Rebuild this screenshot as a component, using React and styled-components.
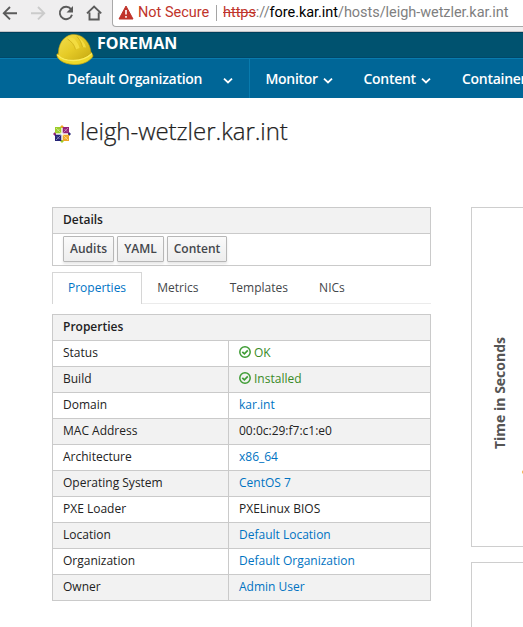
import React from "react";
import styled, { createGlobalStyle, css } from "styled-components";

const GlobalStyle = createGlobalStyle`
  *, *::before, *::after { box-sizing: border-box; }
  html, body { margin: 0; padding: 0; background: #fff; overflow: hidden; }
  body { font-family: "Open Sans", sans-serif; font-size: 12px; line-height: 18px; color: #222; }
`;

const Page = styled.div`
  width: 523px;
  height: 627px;
  overflow: hidden;
`;

const BrowserBar = styled.div`
  display: flex;
  height: 32px;
  background: #efeeef;
  border-bottom: 1px solid #c6c4c6;
`;

const BrowserButtons = styled.div`
  display: flex;
  width: 112px;
  flex: none;
  svg { display: block; }
`;

const AddressBox = styled.div`
  display: flex;
  flex: 1;
  height: 27px;
  min-width: 0;
  background: #fff;
  border: 1px solid #a9a9a9;
  border-top: 0;
  border-right: 0;
  border-bottom-left-radius: 4px;
  font: 14.5px/26px Roboto, sans-serif;
  white-space: nowrap;
  svg { flex: none; margin: 5px 4px 0 5px; }
`;

const Warning = styled.span`
  width: 78px;
  flex: none;
  color: #c0342b;
`;

const AddressDivider = styled.span`
  width: 1px;
  height: 16px;
  margin: 5px 6px 0 0;
  flex: none;
  background: #a5a5a5;
`;

const Url = styled.span`
  color: #808080;
  letter-spacing: -0.05px;
  s { color: #c0342b; }
  b { font-weight: 400; color: #000; }
`;

const Masthead = styled.header`
  display: flex;
  height: 26px;
  padding-left: 55px;
  background: #00526f;
  border-top: 1px solid #003f5c;
  border-bottom: 1px solid #00486a;
`;

const HelmetIcon = styled.svg`
  position: relative;
  z-index: 1;
  flex: none;
  width: 40px;
  height: 34px;
`;

const Brand = styled.span`
  margin-left: 2px;
  color: #fff;
  font-size: 16px;
  line-height: 20px;
  font-weight: 700;
`;

const Nav = styled.nav`
  display: flex;
  height: 40px;
  background: #006697;
  border-top: 1px solid #087bae;
  color: #fff;
  font-size: 14px;
  line-height: 40px;
  font-weight: 600;
  letter-spacing: -0.29px;
  white-space: nowrap;
`;

const NavItem = styled.div`
  display: flex;
  flex: none;
  width: ${(p) => p.$width}px;
  padding-left: ${(p) => p.$inset}px;
  ${(p) => p.$divided && css`border-right: 1px solid #087bae;`}
  svg { flex: none; margin: 18px 0 0 ${(p) => p.$gap}px; }
`;

const Title = styled.h1`
  display: flex;
  margin: 0;
  height: 109px;
  padding: 15px 0 0 52px;
  font-size: 24px;
  line-height: 36px;
  font-weight: 300;
  letter-spacing: -0.04px;
  -webkit-text-stroke: 0.25px #222;
  color: #222;
  svg { flex: none; margin: 11px 8px 0 0; }
`;

const Columns = styled.main`
  display: grid;
  grid-template-columns: 379px 1fr;
  column-gap: 40px;
  margin-left: 52px;
`;

const Panel = styled.section`
  border: 1px solid #cacaca;
  background: #fff;
`;

const PanelHeading = styled.div`
  height: 26px;
  padding: 3px 10px;
  background: #f2f2f2;
  border-bottom: 1px solid #cacaca;
  font-weight: 600;
`;

const Actions = styled.div`
  display: flex;
  gap: 3px;
  height: 31px;
  padding: 2px 10px;
`;

const Button = styled.button`
  width: ${(p) => p.$width}px;
  height: 26px;
  padding: 0 0 1px;
  border: 1px solid #b7b7b7;
  border-radius: 1px;
  background: linear-gradient(#fafafa, #ededed);
  box-shadow: 0 2px 3px rgba(3, 3, 3, 0.1);
  color: #44474c;
  font: 600 12px/22px "Open Sans", sans-serif;
`;

const Tabs = styled.div`
  display: flex;
  height: 32px;
  margin: 6px 0 10px;
  border-bottom: 1px solid #ebebeb;
`;

const Tab = styled.div`
  height: 32px;
  padding: 6px 15px 0 14.2px;
  border: 1px solid transparent;
  border-width: 1px 1px 0;
  color: #43464a;
  ${(p) => p.$active && css`
    padding-left: 15px;
    background: #fff;
    border-color: #d6d6d6;
    color: #0074c5;
  `}
`;

const PropertyRow = styled.div`
  display: grid;
  grid-template-columns: 175px 1fr;
  height: 26px;
  background: ${(p) => (p.$shaded ? "#f2f2f2" : "#fff")};
  border-bottom: 1px solid #cacaca;
  &:last-child { height: 25px; border-bottom: 0; }
`;

const tones = { link: "#0073c2", ok: "#398a27", plain: "#222" };

const Cell = styled.div`
  display: flex;
  padding: 3px 10px;
  color: ${(p) => tones[p.$tone || "plain"]};
  & + & { border-left: 1px solid #cacaca; }
  svg { flex: none; margin: 2px 3px 0 0; }
`;

const Charts = styled.div`
  display: flex;
  flex-direction: column;
  gap: 15px;
`;

const ChartPanel = styled(Panel)`
  display: flex;
  align-items: center;
  height: 340px;
  border-right: 0;
  border-color: #cecece;
`;

const AxisLabel = styled.div`
  width: 20px;
  margin: 33px 0 0 18px;
  writing-mode: vertical-rl;
  transform: rotate(180deg);
  font-size: 14px;
  line-height: 20px;
  font-weight: 700;
  color: #555;
  white-space: nowrap;
`;

const ChartMark = styled.i`
  width: 4px;
  height: 4px;
  margin: 190px 0 0 12px;
  border-radius: 50%;
  background: #f5b04d;
`;

const Caret = () => (
  <svg width="10" height="8" viewBox="0 0 10 8" fill="none" stroke="#fff" strokeWidth="1.8">
    <path d="M1 1.6 5 5.4 9 1.6" />
  </svg>
);

const OkIcon = () => (
  <svg width="12" height="12" viewBox="0 0 12 12" fill="none" stroke="#3f9c35">
    <circle cx="6" cy="6" r="5.2" strokeWidth="1.5" />
    <path d="M3.3 5.8 5.4 7.8 8.8 4.4" strokeWidth="1.7" />
  </svg>
);

const NavigationIcons = () => (
  <svg width="112" height="31" viewBox="0 0 112 31" fill="none" strokeWidth="1.9">
    <path d="M17 13.2H4M10 7 3.8 13.2 10 19.4" stroke="#5b5b5b" />
    <path d="M31 13.2H44M38 7 44.2 13.2 38 19.4" stroke="#cbcbcb" />
    <path d="M71 9.2A6.2 6.2 0 1 0 72 14.8" stroke="#5b5b5b" />
    <path d="M73 6V12.4H66.5Z" fill="#5b5b5b" />
    <path d="M87 13.4 94.1 6.5 101.2 13.4M89.5 12.5V19.5H98.7V12.5" stroke="#5b5b5b" />
  </svg>
);

const Helmet = () => (
  <HelmetIcon viewBox="0 0 40 34">
    <defs>
      <linearGradient id="shell" x1="0" y1="0" x2="1" y2="1">
        <stop offset="0" stopColor="#f3df50" />
        <stop offset=".5" stopColor="#e6cb27" />
        <stop offset="1" stopColor="#c5a812" />
      </linearGradient>
    </defs>
    <path d="M2 21C1 25 7 31 19 31.5 29 32 36 27 38 23L36 19Z" fill="#efd929" stroke="#c6a914" strokeWidth=".8" />
    <path d="M3.5 23C2.5 12 8 3 17 1.6 27 .2 35.5 9 36 20 31 25 23 28 16 27 10 26.6 6 25 3.5 23Z" fill="url(#shell)" stroke="#b99b10" strokeWidth=".6" />
    <path d="M12 6Q16 3 19.5 6C22 9 24 12 24.5 15L20.5 16.5C19 12 16 8 12 6Z" fill="#f3dc40" />
    <path d="M12.5 6C16.5 8.5 19.5 12 20.5 16.5" fill="none" stroke="#cfb01a" strokeWidth=".9" />
    <path d="M22 3.5C27 6.5 30 10 31 14.5L27.5 14C26.500 10 25 7 22 3.5Z" fill="#f3dc40" />
    <path d="M22 3.500C25 7 26.500 10 27.500 14" fill="none" stroke="#cfb01a" strokeWidth=".9" />
    <path d="M2.5 22C9 29 27 30 37 20.5" fill="none" stroke="#fbec5c" strokeWidth="1.4" />
  </HelmetIcon>
);

const CentosIcon = () => (
  <svg width="20" height="20" viewBox="0 0 20 20">
    <path d="M10 1 13 4H7Z" fill="#efa724" />
    <path d="M19 10 16 13V7Z" fill="#262577" />
    <path d="M10 19 7 16H13Z" fill="#9ccd2a" />
    <path d="M1 10 4 7V13Z" fill="#932279" />
    <path d="M3 3H9.3V9.3H3Z" fill="#9ccd2a" />
    <path d="M10.7 3H17V9.3H10.7Z" fill="#932279" />
    <path d="M3 10.7H9.3V17H3Z" fill="#262577" />
    <path d="M10.7 10.7H17V17H10.7Z" fill="#efa724" />
    <path d="M4 4 8.7 8.7M16 4 11.3 8.7M4 16 8.7 11.3M16 16 11.3 11.3M5 7.5 7.5 5M12.5 5 15 7.5M5 12.5 7.5 15M12.5 15 15 12.5" stroke="#fff" strokeWidth=".7" opacity=".6" />
  </svg>
);

const properties = [
  ["Status", "OK", "ok"],
  ["Build", "Installed", "ok"],
  ["Domain", "kar.int", "link"],
  ["MAC Address", "00:0c:29:f7:c1:e0"],
  ["Architecture", "x86_64", "link"],
  ["Operating System", "CentOS 7", "link"],
  ["PXE Loader", "PXELinux BIOS"],
  ["Location", "Default Location", "link"],
  ["Organization", "Default Organization", "link"],
  ["Owner", "Admin User", "link"],
];

export default function App() {
  return (
    <Page>
      <GlobalStyle />
      <BrowserBar>
        <BrowserButtons><NavigationIcons /></BrowserButtons>
        <AddressBox>
          <svg width="16" height="15" viewBox="0 0 16 15">
            <path d="M8 1 15 14H1Z" fill="#c0342b" stroke="#c0342b" strokeLinejoin="round" />
            <path d="M8 5V9.5M8 11V12.7" stroke="#fff" strokeWidth="1.6" />
          </svg>
          <Warning>Not Secure</Warning>
          <AddressDivider />
          <Url><s>https</s>://<b>fore.kar.int</b>/hosts/leigh-wetzler.kar.int</Url>
        </AddressBox>
      </BrowserBar>
      <Masthead>
        <Helmet />
        <Brand>FOREMAN</Brand>
      </Masthead>
      <Nav>
        <NavItem $width={250} $inset={67} $gap={21} $divided>Default Organization<Caret /></NavItem>
        <NavItem $width={98} $inset={15.5} $gap={5}>Monitor<Caret /></NavItem>
        <NavItem $width={98} $inset={15.5} $gap={5}>Content<Caret /></NavItem>
        <NavItem $width={120} $inset={16} $gap={5}>Containers<Caret /></NavItem>
      </Nav>
      <Title><CentosIcon />leigh-wetzler.kar.int</Title>
      <Columns>
        <div>
          <Panel>
            <PanelHeading>Details</PanelHeading>
            <Actions>
              <Button $width={51}>Audits</Button>
              <Button $width={47}>YAML</Button>
              <Button $width={60}>Content</Button>
            </Actions>
          </Panel>
          <Tabs>
            <Tab $active>Properties</Tab>
            <Tab>Metrics</Tab>
            <Tab>Templates</Tab>
            <Tab>NICs</Tab>
          </Tabs>
          <Panel>
            <PanelHeading>Properties</PanelHeading>
            {properties.map(([name, value, tone], i) => (
              <PropertyRow key={name} $shaded={i % 2 === 1}>
                <Cell>{name}</Cell>
                <Cell $tone={tone}>{tone === "ok" && <OkIcon />}{value}</Cell>
              </PropertyRow>
            ))}
          </Panel>
        </div>
        <Charts>
          <ChartPanel>
            <AxisLabel>Time in Seconds</AxisLabel>
            <ChartMark />
          </ChartPanel>
          <ChartPanel />
        </Charts>
      </Columns>
    </Page>
  );
}
